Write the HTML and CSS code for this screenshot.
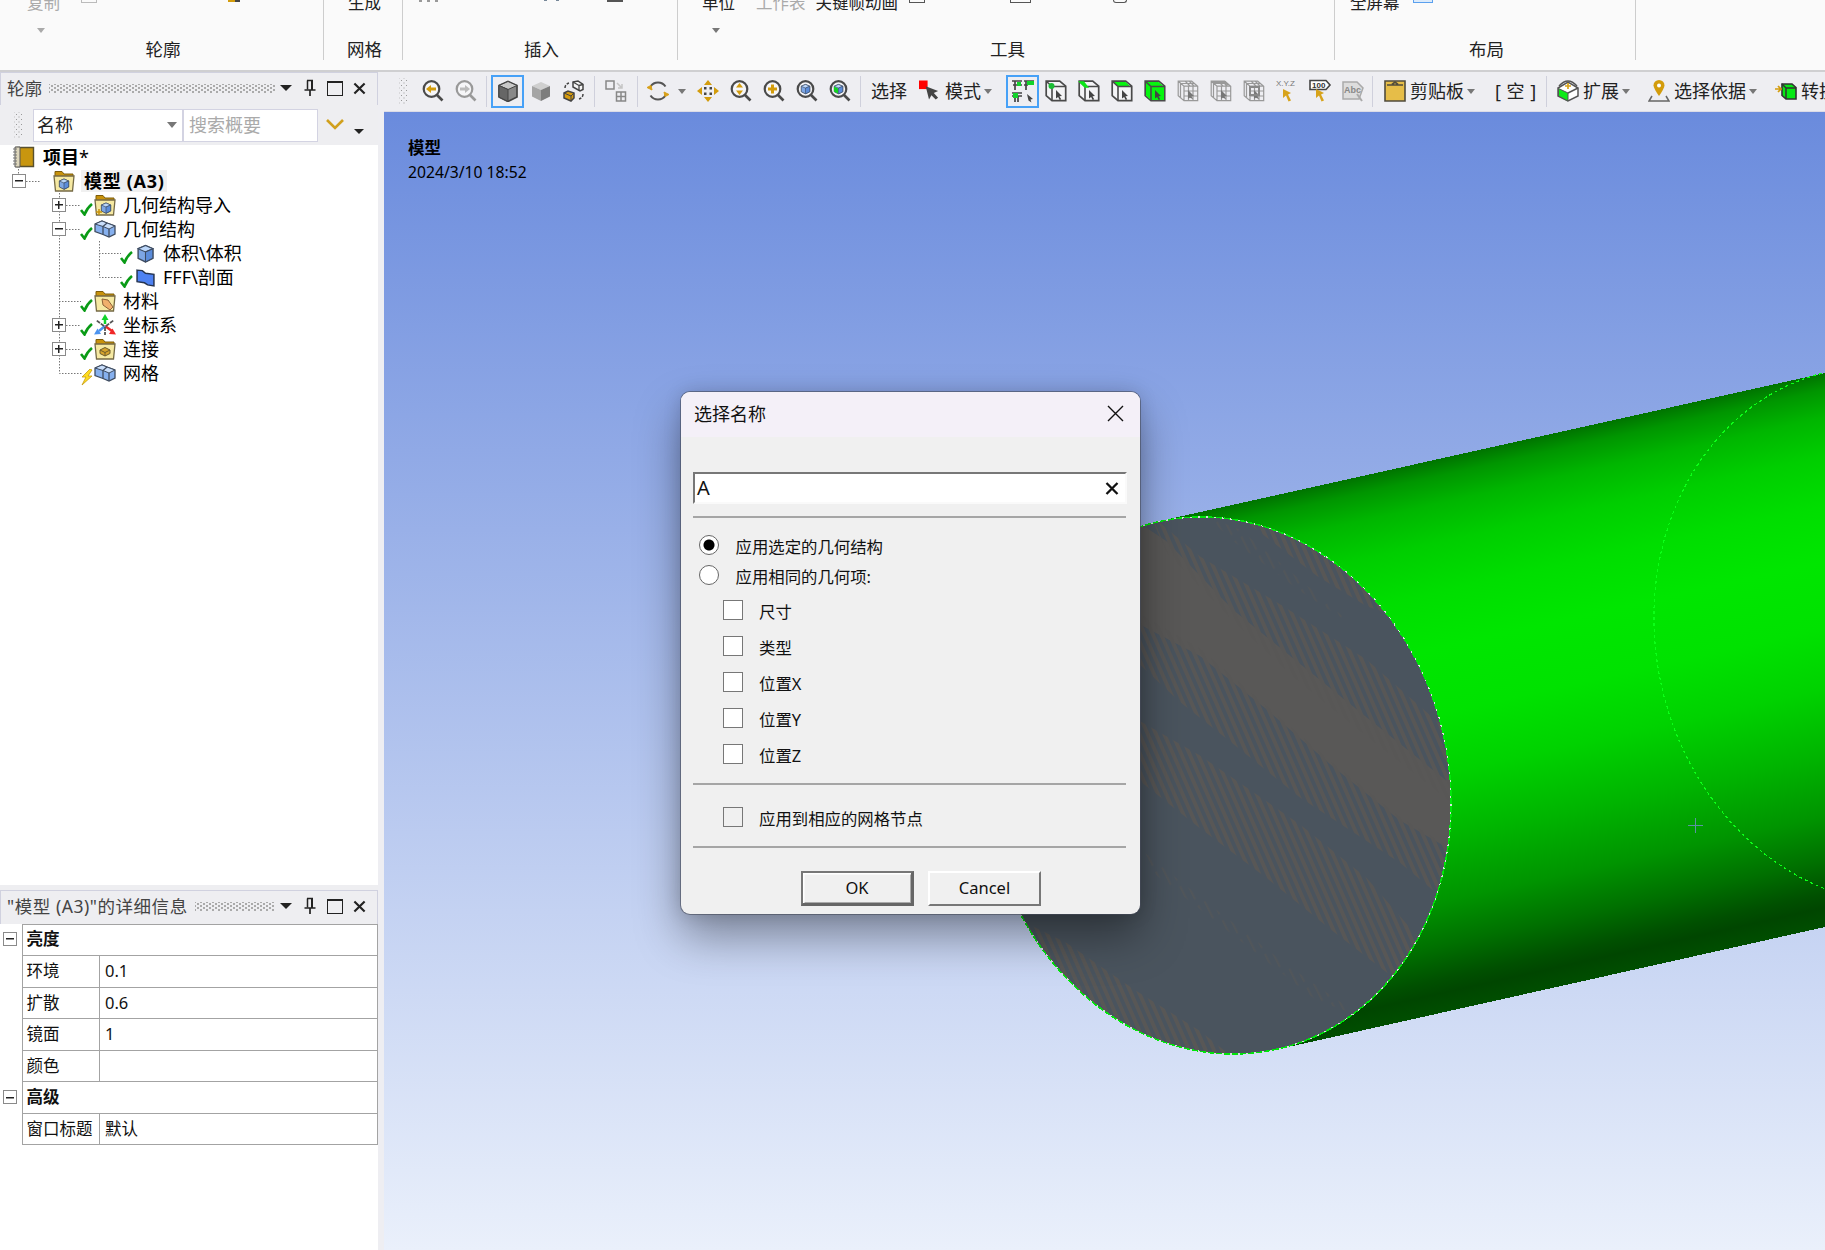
FILE: index.html
```html
<!DOCTYPE html>
<html lang="zh-CN">
<head>
<meta charset="utf-8">
<title>模型</title>
<link rel="stylesheet" href="styles.css">
</head>
<body>
<svg class="defs" width="0" height="0">
  <symbol id="mag" viewBox="0 0 22 22"><circle cx="9.5" cy="9" r="7.8" fill="#f6f6f8" stroke="currentColor" stroke-width="2.2"/><path d="M15 15l5.500 5.500" stroke="currentColor" stroke-width="2.600"/></symbol>
  <symbol id="cube" viewBox="0 0 22 22"><path d="M2 5.500L11 1.500l9 4v11.500l-9 4.500-9-4.500z" fill="#888" stroke="#444" stroke-width="1.700"/><path d="M2 5.500l9-4 9 4-9 4z" fill="#c8c8c8" stroke="#444"/><path d="M2 5.500l9 4v12l-9-4.500z" fill="#666" stroke="#444"/></symbol>
  <symbol id="selcube" viewBox="0 0 22 22"><path d="M1.200 1.200h13.500l6 5v14.500H7l-5.800-5z" fill="#f4f4f6" stroke="#4a4a4a" stroke-width="1.700"/></symbol>
  <symbol id="seledge" viewBox="0 0 22 22"><path d="M1.500 1.500l5.500 5v14M7 6.500h13.500" fill="none" stroke="#4a4a4a" stroke-width="1.600"/><path d="M11 10l6 6-2.500.2 1.700 3-1.500.8-1.600-3-2.100 1.600z" fill="#444"/></symbol>
  <symbol id="gridcube" viewBox="0 0 22 22"><path d="M1.200 1.200h13.500l6 5v14.500H7l-5.800-5zM1.200 1.200L7 6.200h13.700M7 6.200v14.500M11.500 6v14.500M16 6v14.500M7 11h14M7 16h14M3.500 3.500v14M3 3.500h14M8 1l5 5M12 1l5 5" fill="none" stroke="#999" stroke-width="1.200"/><path d="M11 10l6 6-2.500.2 1.700 3-3.300-1.400-1.900 1z" fill="#777"/></symbol>
  <symbol id="pin" viewBox="0 0 12 18"><path d="M3 1.500h6M3.500 1.500v9M8 1v9.500" fill="none" stroke="#222" stroke-width="1.500"/><path d="M7 1h2v10H7z" fill="#222"/><path d="M.5 11h11M6 11v6" stroke="#222" stroke-width="1.700"/></symbol>
  <symbol id="close" viewBox="0 0 14 14"><path d="M1.500 1.500l11 11M12.500 1.500l-11 11" stroke="#222" stroke-width="2.300"/></symbol>
  <symbol id="bluecube" viewBox="0 0 18 18"><path d="M2 4.500L9 1.500l7 3v9L9 17l-7-3.500z" fill="#7da6e4" stroke="#3d4b61" stroke-width="1.300"/><path d="M2 4.500l7-3 7 3-7 3z" fill="#bcd7fa" stroke="#3d4b61"/><path d="M9 7.500V17l7-3.500v-9z" fill="#5b8cda" stroke="#3d4b61"/></symbol>
  <symbol id="folder" viewBox="0 0 22 22"><path d="M2 7V1.500h7L11 4h9v4z" fill="#c8920b" stroke="#7d5c0b"/><path d="M1 6h20l-1.500 15h-17z" fill="#f6e9a2" stroke="#756a45" stroke-width="1.300"/></symbol>
  <symbol id="check" viewBox="0 0 13 13"><path d="M1 7l3.500 4.500Q7 5 12 1" fill="none" stroke="#0a9b16" stroke-width="2.600"/></symbol>
  <symbol id="blocks" viewBox="0 0 22 18"><path d="M1 4l7-3 5 2 8 3v8l-6 3-6-2.500-8-3z" fill="#86b0ee" stroke="#3f4c60" stroke-width="1.300"/><path d="M1 4l7-3 5 2 8 3-6 3-6-2.500z" fill="#c9defb" stroke="#3f4c60"/><path d="M13 3L9 6.500v8M15 9v8" fill="none" stroke="#3f4c60" stroke-width="1.300"/></symbol>
</svg>

<header class="ribbon">
  <section class="group g1"><div class="cmds"><span class="dim" style="margin-left:27px">复制</span><i class="stub dim" style="margin-left:21px"></i><i class="stub gold" style="margin-left:131px"></i></div><b class="arrow grey drop1"></b><h2>轮廓</h2></section>
  <section class="group g2"><div class="cmds"><span style="margin-left:24px">生成</span></div><h2>网格</h2></section>
  <section class="group g3"><div class="cmds"><i class="stub tick" style="margin-left:16px"></i><i class="stub cross" style="margin-left:105px"></i><i class="stub solid" style="margin-left:48px"></i></div><h2>插入</h2></section>
  <section class="group g4"><div class="cmds"><span style="margin-left:24px">单位</span><span class="dim" style="margin-left:21px">工作表</span><span style="margin-left:10px">关键帧动画</span><i class="stub" style="margin-left:11px"></i><i class="stub wide" style="margin-left:85px"></i><i class="stub round" style="margin-left:82px"></i></div><b class="arrow grey drop4"></b><h2>工具</h2></section>
  <section class="group g5"><div class="cmds"><span style="margin-left:15px">全屏幕</span><i class="stub blue" style="margin-left:13px"></i></div><h2>布局</h2></section>
</header>

<div class="work">
<aside class="side">
  <div class="caption"><span>轮廓</span><i class="dots"></i><b class="arrow big"></b><svg class="pin"><use href="#pin"/></svg><i class="max"></i><svg class="x"><use href="#close"/></svg></div>
  <div class="search">
    <i class="grip"></i>
    <div class="combo"><span>名称</span><b class="arrow mid"></b></div>
    <div class="query">搜索概要</div>
    <svg class="chev" viewBox="0 0 18 12"><path d="M1 2l8 8 8-8" fill="none" stroke="#d1a01d" stroke-width="2.600"/></svg>
    <b class="arrow more"></b>
  </div>
  <div class="tree">
    <svg class="lines" width="130" height="240" viewBox="0 145 130 240" fill="none" stroke="#777" stroke-dasharray="1.500 1.500"><path d="M18.500 169v6M26 181.500h15M59.500 193v180.500h22M66 205.500h15M66 229.500h15M59 301.500h22M66 325.500h15M66 349.500h15M99.500 241v36.500h22M99 253.500h22"/></svg>
    <div class="node l0"><svg class="ic" viewBox="0 0 22 22"><path d="M4 1.500h16.500v19H4z" fill="#c8960f" stroke="#58502f" stroke-width="1.400"/><path d="M2 1h5v20H2z" fill="#ddd6bb" stroke="#555"/><path d="M0 3h4M0 6h4M0 9h4M0 12h4M0 15h4M0 18h4" stroke="#777"/></svg><strong>项目<em>*</em></strong></div>
    <div class="node l1"><i class="exp"></i><svg class="ic" viewBox="0 0 22 22"><use href="#folder"/><use href="#bluecube" x="5" y="8" width="12" height="12"/></svg><strong class="hot">模型 (A3)</strong></div>
    <div class="node l2"><i class="exp plus"></i><svg class="ck"><use href="#check"/></svg><svg class="ic" viewBox="0 0 22 22"><use href="#folder"/><use href="#bluecube" x="6" y="8" width="12" height="12"/><path d="M2 18h6M5 15v6" stroke="#c8920b" stroke-width="1.500"/></svg><span>几何结构导入</span></div>
    <div class="node l2"><i class="exp"></i><svg class="ck"><use href="#check"/></svg><svg class="ic"><use href="#blocks"/></svg><span>几何结构</span></div>
    <div class="node l3"><svg class="ck"><use href="#check"/></svg><svg class="ic s"><use href="#bluecube"/></svg><span>体积\体积</span></div>
    <div class="node l3"><svg class="ck"><use href="#check"/></svg><svg class="ic s" viewBox="0 0 18 18"><path d="M1 2l5 .5 3 2.500 8 1v11l-6-1-3-2-7-1z" fill="#4e82f2" stroke="#26344f" stroke-width="1.400"/></svg><span>FFF\剖面</span></div>
    <div class="node l2 leaf"><svg class="ck"><use href="#check"/></svg><svg class="ic" viewBox="0 0 22 22"><use href="#folder"/><path d="M8 9l6 1 5 7-3 3-7-5z" fill="#f1b06c" stroke="#8d6238"/></svg><span>材料</span></div>
    <div class="node l2"><i class="exp plus"></i><svg class="ck"><use href="#check"/></svg><svg class="ic" viewBox="0 0 22 22"><path d="M11 10V4" stroke="#12d32b" stroke-width="2.500"/><path d="M7.500 6L11 0l3.500 6z" fill="#12d32b"/><path d="M11 12l7 5" stroke="#f02727" stroke-width="2.500"/><path d="M15 20l7 .5-3.500-6z" fill="#f02727"/><path d="M11 12l-6 5" stroke="#4b93ef" stroke-width="2.500"/><path d="M7 20l-7 .5 3.500-6z" fill="#4b93ef"/><path d="M10 12L2 6M12 12l8-6M11 13v8" stroke="#555" stroke-width="1.800" stroke-dasharray="4 1"/></svg><span>坐标系</span></div>
    <div class="node l2"><i class="exp plus"></i><svg class="ck"><use href="#check"/></svg><svg class="ic" viewBox="0 0 22 22"><use href="#folder"/><path d="M6 12l5-2.500 5 2.500v3.500l-5 2.500-5-2.500z" fill="#d6a32c" stroke="#6d5b2b"/><path d="M6 12l5 2.500 5-2.500M11 14.500v3.500" fill="none" stroke="#6d5b2b"/></svg><span>连接</span></div>
    <div class="node l2 leaf"><svg class="ck" viewBox="0 0 13 17"><path d="M10 0L2 8h4l-4 8 10-9H8l4-6z" fill="#ffdc1e" stroke="#c49a10" stroke-width=".8"/></svg><svg class="ic"><use href="#blocks"/></svg><span>网格</span></div>
  </div>
  <div class="caption second"><span>"模型 (A3)"的详细信息</span><i class="dots"></i><b class="arrow big"></b><svg class="pin"><use href="#pin"/></svg><i class="max"></i><svg class="x"><use href="#close"/></svg></div>
  <div class="details">
    <div class="row head"><i class="exp"></i><strong>亮度</strong></div>
    <div class="row"><span>环境</span><span>0.1</span></div>
    <div class="row"><span>扩散</span><span>0.6</span></div>
    <div class="row"><span>镜面</span><span>1</span></div>
    <div class="row"><span>颜色</span><span></span></div>
    <div class="row head"><i class="exp"></i><strong>高级</strong></div>
    <div class="row"><span>窗口标题</span><span>默认</span></div>
  </div>
</aside>

<main class="main">
  <nav class="tools">
    <i class="grip"></i>
    <span class="btn first"><svg><use href="#mag"/><path d="M4 9l5-4v2.500h5v3H9V13z" fill="#d39c0c"/></svg></span>
    <span class="btn off"><svg><use href="#mag"/><path d="M15 9l-5-4v2.500H5v3h5V13z" fill="#bbb"/></svg></span>
    <i class="sep"></i>
    <span class="btn on"><svg><use href="#cube"/></svg></span>
    <span class="btn"><svg viewBox="0 0 22 22"><path d="M2 6l9-4 9 4-9 4z" fill="#cfcfcf"/><path d="M2 6l9 4v11l-9-4.500z" fill="#a5a5a5"/><path d="M20 6l-9 4v11l9-4.500z" fill="#7d7d7d"/></svg></span>
    <span class="btn"><svg viewBox="0 0 22 22"><path d="M10 2l5-1 5 3.500v5l-3 1.500-7-4z" fill="#f5f5f5" stroke="#444" stroke-width="1.500"/><path d="M10 2l6 3.500v5M16 5.500l4-1" fill="none" stroke="#444" stroke-width="1.300"/><path d="M1 13l4-2 6 2v5l-3 3-7-3z" fill="#d69b0d" stroke="#444" stroke-width="1.500"/><path d="M1 13l7 3 3-3M8 16v4" fill="none" stroke="#444"/><path d="M2 8q0-4 4-5M20 14q0 4-4 5" fill="none" stroke="#444" stroke-width="1.500" stroke-dasharray="3 1.500"/></svg></span>
    <i class="sep"></i>
    <span class="btn wide"><svg viewBox="0 0 22 22"><path d="M1 1h8v8H1zM11.500 12h9v9h-9zM16 12v9M11.500 16.500h9" fill="none" stroke="#888" stroke-width="1.500"/><path d="M12 3l5 5M17 4v4h-4" fill="none" stroke="#c5c5c5" stroke-width="1.500"/></svg></span>
    <i class="sep"></i>
    <span class="btn spin"><svg viewBox="0 0 22 22"><path d="M3.500 6.500a9 9 0 0 1 15 0M18.500 15.500a9 9 0 0 1-15 0" fill="none" stroke="#555" stroke-width="2"/><path d="M0 7.500l4-2 1 4.500zM22 14.500l-4 2-1-4.500z" fill="#d8a019" stroke="#d8a019"/></svg></span>
    <b class="arrow tb rot"></b>
    <span class="btn"><svg viewBox="0 0 22 22"><path d="M11 0l4 5H7zM11 22l4-5H7zM0 11l5-4v8zM22 11l-5-4v8z" fill="#d39c0c"/><path d="M7 7h2.500v2.500H7zM12.500 7H15v2.500h-2.500zM7 12.500h2.500V15H7zM12.500 12.500H15V15h-2.500z" fill="#444"/></svg></span>
    <span class="btn"><svg><use href="#mag"/><path d="M9.500 3l3.500 4.500H6zM9.500 15l3.500-4.500H6z" fill="#d39c0c"/></svg></span>
    <span class="btn"><svg><use href="#mag"/><path d="M9.500 4.500v9M5 9h9" stroke="#d39c0c" stroke-width="3"/></svg></span>
    <span class="btn"><svg><use href="#mag"/><use href="#bluecube" x="4" y="3.500" width="11" height="11"/></svg></span>
    <span class="btn"><svg><use href="#mag"/><use href="#bluecube" x="4" y="3.500" width="11" height="11"/><path d="M5 6.500l4 2v5l-4-2z" fill="#11d51e"/></svg></span>
    <i class="sep"></i>
    <span class="lbl sel">选择</span>
    <svg class="mode" viewBox="0 0 22 22"><path d="M0 0h9v9H0z" fill="#f00"/><path d="M7 6l13 5-4.500 2L20 18l-2.500 2-4.500-4.500L10.500 20z" fill="#444"/></svg>
    <span class="lbl">模式</span><b class="arrow tb"></b>
    <span class="btn on gap"><svg class="lg" viewBox="0 0 24 24"><path d="M1 2h10M2 6h9M4 2v9M13 2h10M13 6h4M15 2v9M1 14h10M4 14v9M1 17h3M6 17h5M7 17v6" fill="none" stroke="#444" stroke-width="1.700"/><path d="M6 3h4v4H6zM16 2h7v4h-7zM2 14h5v5H2z" fill="#12d32b"/><path d="M16 15l6 5-2.500.5 1 3-3-2z" fill="#444"/></svg></span>
    <span class="btn"><svg><use href="#selcube"/><use href="#seledge"/><circle cx="6.500" cy="6" r="3" fill="#1bbd35"/></svg></span>
    <span class="btn"><svg><use href="#selcube"/><use href="#seledge"/><path d="M2 2h3.500l4 5H7z" fill="#0ce818" stroke="#0ce818" stroke-width="1.500"/></svg></span>
    <span class="btn"><svg><use href="#selcube"/><path d="M2 2h12.500l5 4.500H7z" fill="#06f50f"/><use href="#seledge"/></svg></span>
    <span class="btn"><svg><use href="#selcube"/><path d="M2 2h12.500l5.500 4.500V20H7l-5-4.500z" fill="#06f50f"/><use href="#seledge"/></svg></span>
    <span class="btn"><svg><use href="#gridcube"/></svg></span>
    <span class="btn"><svg><use href="#gridcube"/><path d="M3 2h12l3 3" fill="none" stroke="#999" stroke-width="2"/></svg></span>
    <span class="btn"><svg><use href="#gridcube"/><path d="M7 7h9v8H7z" fill="none" stroke="#888" stroke-width="2"/></svg></span>
    <span class="btn"><svg class="lg" viewBox="0 0 24 24"><text x="1" y="7" class="xyz">X.Y.Z</text><path d="M8 10l8 4-3 1.500 3 6-2.500 1-2.500-6-3 2.500z" fill="#d7a31b"/></svg></span>
    <span class="btn"><svg class="lg" viewBox="0 0 24 24"><path d="M2 1.500h16l4 4.500-4 4.500H2z" fill="#fff" stroke="#444" stroke-width="1.600"/><text x="4" y="9" class="num">100</text><path d="M8 10l8 4-3 1.500 3 6-2.500 1-2.500-6-3 2.500z" fill="#d7a31b"/></svg></span>
    <span class="btn"><svg viewBox="0 0 22 22"><path d="M1 2h14l6 6-4 11H1z" fill="#ddd" stroke="#aaa" stroke-width="1.500"/><text x="2" y="13" class="abc">Abc</text><path d="M15 14l5 7" stroke="#aaa" stroke-width="2"/></svg></span>
    <i class="sep late"></i>
    <svg class="clip" viewBox="0 0 22 22"><path d="M1 1h20v20H1z" fill="#e6bd48" stroke="#504b3c" stroke-width="1.600"/><path d="M3 5h16M8 4.500L11 2l3 2.500" fill="none" stroke="#504b3c" stroke-width="1.700"/></svg>
    <span class="lbl">剪贴板</span><b class="arrow tb"></b>
    <span class="lbl empty">[ 空 ]</span>
    <i class="sep"></i>
    <svg class="ext" viewBox="0 0 22 22"><path d="M1 8l10-6 10 6v8l-10 5-10-5z" fill="#fff" stroke="#555" stroke-width="1.500"/><path d="M1.500 8.500L11 13v8L1.500 16z" fill="#0deb18" stroke="#555"/><path d="M21 8l-10 5" stroke="#555" stroke-width="1.500"/><path d="M2 6q9-10 18 0" fill="none" stroke="#555" stroke-width="1.500"/><path d="M11 3v6M8 6h6" stroke="#d7a31b" stroke-width="1.700"/></svg>
    <span class="lbl">扩展</span><b class="arrow tb"></b>
    <svg class="loc" viewBox="0 0 22 22"><path d="M11 0a5.500 5.500 0 0 1 5.500 5.500Q16 9 11 16 6 9 5.500 5.500A5.500 5.500 0 0 1 11 0z" fill="#d39c0c"/><circle cx="11" cy="5.500" r="2" fill="#fff"/><path d="M4 16l-3 5h20l-3-5" fill="none" stroke="#666" stroke-width="1.500"/></svg>
    <span class="lbl">选择依据</span><b class="arrow tb"></b>
    <svg class="conv" viewBox="0 0 22 22"><path d="M7 4h10l4 3.500V19H11l-4-3.500z" fill="#06e915" stroke="#333" stroke-width="1.600"/><path d="M7 4l4 4v11M11 8h10" fill="none" stroke="#333" stroke-width="1.500"/><path d="M0 9h5M3 6l3 3-3 3" fill="none" stroke="#d39c0c" stroke-width="1.700"/></svg>
    <span class="lbl">转换</span>
  </nav>
  <div class="view">
    <svg class="scene" width="1441" height="1138" viewBox="384 112 1441 1138">
      <defs>
        <linearGradient id="body" gradientUnits="userSpaceOnUse" x1="1825" y1="373" x2="1942.800" y2="900.700">
          <stop offset="0" stop-color="#007400"/><stop offset=".03" stop-color="#009600"/><stop offset=".08" stop-color="#00b600"/><stop offset=".15" stop-color="#00ce00"/><stop offset=".24" stop-color="#00de00"/><stop offset=".34" stop-color="#00e600"/><stop offset=".46" stop-color="#00e200"/><stop offset=".57" stop-color="#00d200"/><stop offset=".69" stop-color="#00b400"/><stop offset=".8" stop-color="#009400"/><stop offset=".88" stop-color="#007000"/><stop offset=".94" stop-color="#005000"/><stop offset=".965" stop-color="#004600"/><stop offset="1" stop-color="#004e00"/>
        </linearGradient>
        <pattern id="hatch" width="22" height="200" patternUnits="userSpaceOnUse" patternTransform="rotate(-27)"><path d="M0 0h11v200H0z" fill="#585756"/></pattern>
        <pattern id="fine" width="22" height="70" patternUnits="userSpaceOnUse" patternTransform="rotate(-30)"><path d="M0 0h6v52H0z" fill="#565758"/></pattern>
        <clipPath id="disk"><ellipse cx="1217.500" cy="785.500" rx="270.300" ry="231.500" transform="rotate(77.200 1217.500 785.500)"/></clipPath>
      </defs>
      <path d="M1158 521.500L1825 373v554l-548 122.500z" fill="url(#body)" shape-rendering="crispEdges"/>
      <g clip-path="url(#disk)">
        <path d="M900 500h600v600H900z" fill="#4a545e"/>
        <g transform="translate(1000 480) scale(.33333 .38265)">
          <path d="M380 90L500 160 700 340 900 480 1100 620 1360 800V970L1200 890 1000 750 800 600 600 460 380 360z" fill="#595857"/>
          <path d="M450 90L600 200 850 330 1100 470 1350 660V840L1100 670 900 530 700 370 500 190z" fill="url(#hatch)"/>
          <path d="M380 330L600 440 800 590 1000 740 1200 880 1350 960 1310 1080 1200 1000 900 830 700 690 540 580 380 450z" fill="url(#hatch)"/>
          <path d="M380 610L600 720 900 900 1100 1040 1260 1200 1180 1300 1000 1180 800 1040 600 910 380 760z" fill="url(#hatch)"/>
          <path d="M60 1150L200 1210 400 1330 600 1440 700 1510H560L300 1390 150 1290z" fill="url(#hatch)"/>
          <path d="M740 110L900 140 1050 240 1170 350 1100 330 950 250z" fill="url(#hatch)"/>
          <path d="M620 95L720 130 900 260 1060 380 900 290 700 160zM400 950L600 1090 850 1260 1080 1400 950 1360 700 1190 450 1020z" fill="url(#fine)" opacity=".6"/>
        </g>
      </g>
      <g fill="none" shape-rendering="crispEdges">
        <ellipse cx="1217.500" cy="785.500" rx="270.300" ry="231.500" transform="rotate(77.200 1217.500 785.500)" stroke="#d5e3dc" stroke-width="1.200"/>
        <ellipse cx="1217.500" cy="785.500" rx="270.300" ry="231.500" transform="rotate(77.200 1217.500 785.500)" stroke="#00e60a" stroke-width="1.500" stroke-dasharray="6 2"/>
        <ellipse cx="1887.500" cy="635.500" rx="270.300" ry="231.500" transform="rotate(77.200 1887.500 635.500)" stroke="#0bff17" stroke-width="1.200" stroke-dasharray="3 3"/>
        <path d="M1687.500 825.500h15M1695.500 818v15" stroke="#5b94a3"/>
      </g>
    </svg>
    <div class="stamp"><strong>模型</strong><span>2024/3/10 18:52</span></div>
    <form class="dialog">
      <div class="title"><span>选择名称</span><svg width="17" height="17" viewBox="0 0 17 17"><path d="M1 1l15 15M16 1L1 16" stroke="#111" stroke-width="1.400"/></svg></div>
      <div class="field"><span>A</span><svg width="14" height="13" viewBox="0 0 14 13"><path d="M1.500 1l11 11M12.500 1l-11 11" stroke="#111" stroke-width="2.300"/></svg></div>
      <hr class="r1">
      <label class="radio sel"><i></i>应用选定的几何结构</label>
      <label class="radio"><i></i>应用相同的几何项:</label>
      <div class="checks">
        <label><i></i>尺寸</label>
        <label><i></i>类型</label>
        <label><i></i>位置X</label>
        <label><i></i>位置Y</label>
        <label><i></i>位置Z</label>
      </div>
      <hr>
      <label class="nodes"><i></i>应用到相应的网格节点</label>
      <hr>
      <div class="actions"><span class="push default">OK</span><span class="push">Cancel</span></div>
    </form>
  </div>
</main>
</div>
</body>
</html>
```
FILE: styles.css
```css
* { box-sizing: border-box; }
body { margin: 0; width: 1825px; height: 1250px; overflow: hidden; background: #eeeef2; color: #222; font: 18px/24px "Noto Sans", "Noto Sans CJK SC", sans-serif; }
i { font-style: normal; }
svg { display: block; flex: none; }
.defs { position: absolute; }

/* ribbon */
.ribbon { display: flex; height: 72px; background: #fafafa; border-bottom: 2px solid #cfcfd1; overflow: hidden; }
.group { height: 60px; display: flex; flex-direction: column; border-right: 1.500px solid #cdcdcd; white-space: nowrap; }
.g1 { width: 324px; } .g2 { width: 79px; } .g3 { width: 275px; } .g4 { width: 657px; } .g5 { width: 301px; }
.group h2 { margin: auto 0 0; padding: 0 0 0 3px; height: 22px; font: 17.500px/22px "Noto Sans CJK SC", sans-serif; text-align: center; }
.cmds { display: flex; height: 13px; margin-top: 0; }
.cmds span { font-size: 16.500px; line-height: 20px; margin-top: -7.500px; height: 20px; }
.dim { color: #aaa; }
.stub { width: 16px; height: 3px; border: 1.500px solid #555; border-top: 0; }
.stub.dim { border-color: #bbb; }
.stub.gold { width: 12px; height: 2px; border: 0; background: linear-gradient(90deg, #d39c0c 60%, #444 60%); }
.stub.tick { width: 20px; height: 2px; border: 0; background: repeating-linear-gradient(90deg, #999 0 3px, transparent 3px 8px); }
.stub.cross { width: 15px; height: 1px; border: 0; background: linear-gradient(90deg, #789 20%, transparent 20% 80%, #789 80%); }
.stub.solid { border-top: 0; height: 2px; background: #555; }
.stub.wide { width: 21px; }
.stub.round { width: 14px; border-radius: 0 0 6px 6px; }
.stub.blue { width: 20px; border-color: #5aa0ee; background: #dcebfb; }
.arrow { flex: none; width: 0; height: 0; border: 4.500px solid transparent; border-top: 5px solid #777; border-bottom: 0; }
.drop1, .drop4 { margin-top: 15px; }
.drop1 { margin-left: 37px; border-top-color: #aaa; }
.drop4 { margin-left: 34px; }

.work { display: flex; height: 1178px; }

/* docked panels */
.side { width: 378px; margin-right: 6px; display: flex; flex-direction: column; background: #fff; }
.caption { display: flex; align-items: center; height: 33px; padding: 0 0 2px 6px; border: 1px solid #d0d1df; border-width: 1px 1px 0; background: #eeeef1; color: #444; font-size: 17.500px; white-space: nowrap; }
.dots { flex: 1; height: 9px; margin: 0 5px 0 7px; background: radial-gradient(circle, #aaa 0 .8px, transparent 1px) 0 0 / 6px 4px, radial-gradient(circle, #aaa 0 .8px, transparent 1px) 3px 2px / 6px 4px; }
.arrow.big { border-width: 6px 6px 0; border-top-color: #222; }
.pin { width: 12px; height: 18px; margin-left: 12px; }
.max { width: 16px; height: 15px; margin-left: 11px; border: 1.500px solid #222; border-top-width: 2px; }
.x { width: 13px; height: 13px; margin: 0 11px 0 10px; }
.search { display: flex; align-items: center; height: 40px; background: #eeeef1; }
.grip { flex: none; width: 8px; height: 27px; background: radial-gradient(circle, #999 0 .8px, transparent 1px) 0 0 / 5px 5px, radial-gradient(circle, #999 0 .8px, transparent 1px) 2.500px 2.500px / 5px 5px; }
.search .grip { margin: 0 11px 0 14px; }
.combo, .query { height: 33px; border: 1.500px solid #d3d3e2; background: #fff; display: flex; align-items: center; }
.combo { width: 150px; padding: 0 5px 0 3px; justify-content: space-between; }
.query { width: 135px; padding-left: 5px; color: #aaa; }
.arrow.mid { border-width: 6px 5.500px 0; }
.chev { width: 18px; height: 12px; margin: 0 11px 3px 8px; }
.arrow.more { border-width: 5px 5px 0; border-top-color: #222; margin: 13px 0 0 -1px; }

.tree { position: relative; height: 740px; color: #000; }
.lines { position: absolute; left: 0; top: 0; }
.node { position: relative; display: flex; align-items: center; height: 24px; white-space: nowrap; }
.node em { font-style: normal; font-weight: 400; }
.ic { width: 22px; height: 22px; margin-right: 7px; }
.ic.s { width: 19px; height: 19px; }
.ck { width: 13px; height: 13px; margin: 8px 1px 0 0; }
.l0 { padding-left: 13px; }
.l0 .ic { margin-right: 8px; }
.l1 { padding-left: 12px; }
.l2 { padding-left: 52px; }
.l3 { padding-left: 120px; }
.l2.leaf { padding-left: 80px; }
.l3 .ic { margin: 0 8px 0 2px; }
.leaf .ck[viewBox] { height: 17px; }
.exp { flex: none; position: relative; width: 14px; height: 14px; border: 1.500px solid #8a8a8a; background: linear-gradient(#222, #222) center / 8px 1.500px no-repeat #fff; }
.exp.plus { background: linear-gradient(#222, #222) center / 8px 1.500px no-repeat, linear-gradient(#222, #222) center / 1.500px 8px no-repeat #fff; }
.l1 .exp { margin-right: 27px; }
.l2 .exp { margin-right: 14px; }
.l1 .ic { margin-right: 6px; }
.hot { background: #f0f0f0; padding: 0 2px 0 3px; font-size: 18px; letter-spacing: .7px; line-height: 22px; }

.second { height: 34px; margin-top: 5px; padding-bottom: 3px; box-shadow: 0 -5px #eeeef1; }
.second span { letter-spacing: .55px; }
.details { width: 378px; padding-left: 21.500px; font-size: 16.500px; color: #111; }
.row { display: flex; align-items: center; height: 31.430px; border: 1.500px solid #a3a3a3; border-top: 0; position: relative; }
.row:first-child { height: 32.430px; border-top: 1.500px solid #a3a3a3; padding-bottom: 2px; }
.row span { height: 100%; line-height: 29px; white-space: nowrap; }
.row span:first-child { width: 77.500px; padding-left: 4px; border-right: 1.500px solid #a3a3a3; }
.row span:last-child { padding-left: 5px; }
.row strong { padding-left: 4px; }
.row .exp { margin-left: -20px; margin-right: 6px; }

/* graphics toolbar */
.main { width: 1441px; }
.tools { display: flex; align-items: center; height: 40px; padding-bottom: 1px; border-bottom: 1px solid #dcdce6; overflow: hidden; white-space: nowrap; }
.tools .grip { margin-left: 15px; }
.btn { flex: none; width: 33px; height: 33px; display: flex; align-items: center; justify-content: center; color: #4a4a4a; }
.btn.first { margin-left: 9px; }
.btn.off { color: #999; }
.btn.on { border: 2px solid #47a1f7; }
.btn svg { width: 22px; height: 22px; overflow: visible; }
.btn svg.lg { width: 24px; height: 24px; }
.sep { flex: none; width: 1px; height: 31px; margin: 0 4px; background: #cfd0dc; }
.btn.wide { width: 34px; }
.btn.spin { width: 32px; }
.arrow.tb { margin-left: 3px; }
.arrow.rot { margin: 0 5px 0 4px; }
.lbl { flex: none; }
.lbl.sel { margin-left: 6px; }
.mode { width: 21px; height: 22px; margin: 0 5px 0 12px; }
.btn.gap { margin-left: 14px; }
.xyz { font: 8px "Liberation Sans", sans-serif; fill: #777; }
.num { font: bold 8px "Liberation Sans", sans-serif; fill: #333; }
.abc { font: bold 9px "Liberation Sans", sans-serif; fill: #888; }
.sep.late { margin-left: 3px; margin-right: 11px; }
.clip { width: 22px; height: 22px; margin-right: 4px; }
.empty { margin-left: 20px; margin-right: 2px; width: 45px; letter-spacing: .5px; }
.ext { width: 22px; height: 22px; margin: 0 4px 0 6px; }
.loc { width: 22px; height: 22px; margin: 0 4px 0 18px; }
.conv { width: 22px; height: 22px; margin: 0 4px 0 18px; }

/* 3D viewport */
.view { position: relative; height: 1138px; background: linear-gradient(#6a8bdd, #eaf0fb); overflow: hidden; }
.scene { position: absolute; left: 0; top: 0; }
.stamp { position: absolute; left: 24px; top: 24px; display: flex; flex-direction: column; color: #000; font-size: 15.700px; }
.stamp strong { font-size: 16.500px; }

/* selection dialog */
.dialog { position: absolute; left: 297px; top: 280px; width: 459px; height: 522px; border-radius: 9px; background: #f0f0f0; box-shadow: 0 0 0 1px rgba(70, 75, 90, .6), 0 22px 46px rgba(0, 0, 0, .38), 0 0 18px rgba(0, 0, 0, .15); color: #111; font-size: 16.400px; }
.title { display: flex; justify-content: space-between; align-items: center; height: 45px; padding: 0 16px 0 13px; border-radius: 9px 9px 0 0; background: #f4f0f8; font-size: 18px; }
.title span { padding-bottom: 2px; }
.title svg { margin-bottom: 2px; }
.field { display: flex; align-items: center; justify-content: space-between; width: 434px; height: 32px; margin: 35px 0 0 12px; padding: 0 6px 0 2px; border: 2.500px solid; border-color: #777 #fafafa #fafafa #777; background: #fff; font-size: 20px; }
.dialog hr { width: 433px; height: 2px; margin: 0 0 0 12px; border: 0; background: #a5a5a5; }
.dialog hr.r1 { margin-top: 12px; margin-bottom: 14px; }
.dialog label { display: flex; align-items: center; white-space: nowrap; }
.radio { height: 30px; padding-left: 17.500px; }
.radio i { width: 20px; height: 20px; margin: 0 17px 4px 0; border: 1.500px solid #666; border-radius: 50%; background: #fff; }
.radio.sel i { background: radial-gradient(circle, #000 0 5px, #fff 6px); }
.checks { padding: 2px 0 9px; }
.checks label { height: 36px; padding-left: 42px; }
.checks i, .nodes i { width: 20px; height: 20px; margin: 0 16px 4px 0; border: 1.500px solid #777; background: #fff; }
.nodes { height: 61px; padding: 6px 0 0 42px; }
.nodes i { background: transparent; }
.actions { display: flex; gap: 14px; padding: 23px 0 0 120px; }
.push { width: 113px; height: 35px; display: flex; align-items: center; justify-content: center; padding-bottom: 1px; border: 2px solid; border-color: #fff #777 #777 #fff; font-size: 16.500px; }
.push.default { border-color: #777 #666 #666 #777; border-right-width: 3px; border-bottom-width: 3px; box-shadow: inset 1.500px 1.500px #fff, inset -1px -1px #aaa; }
```
